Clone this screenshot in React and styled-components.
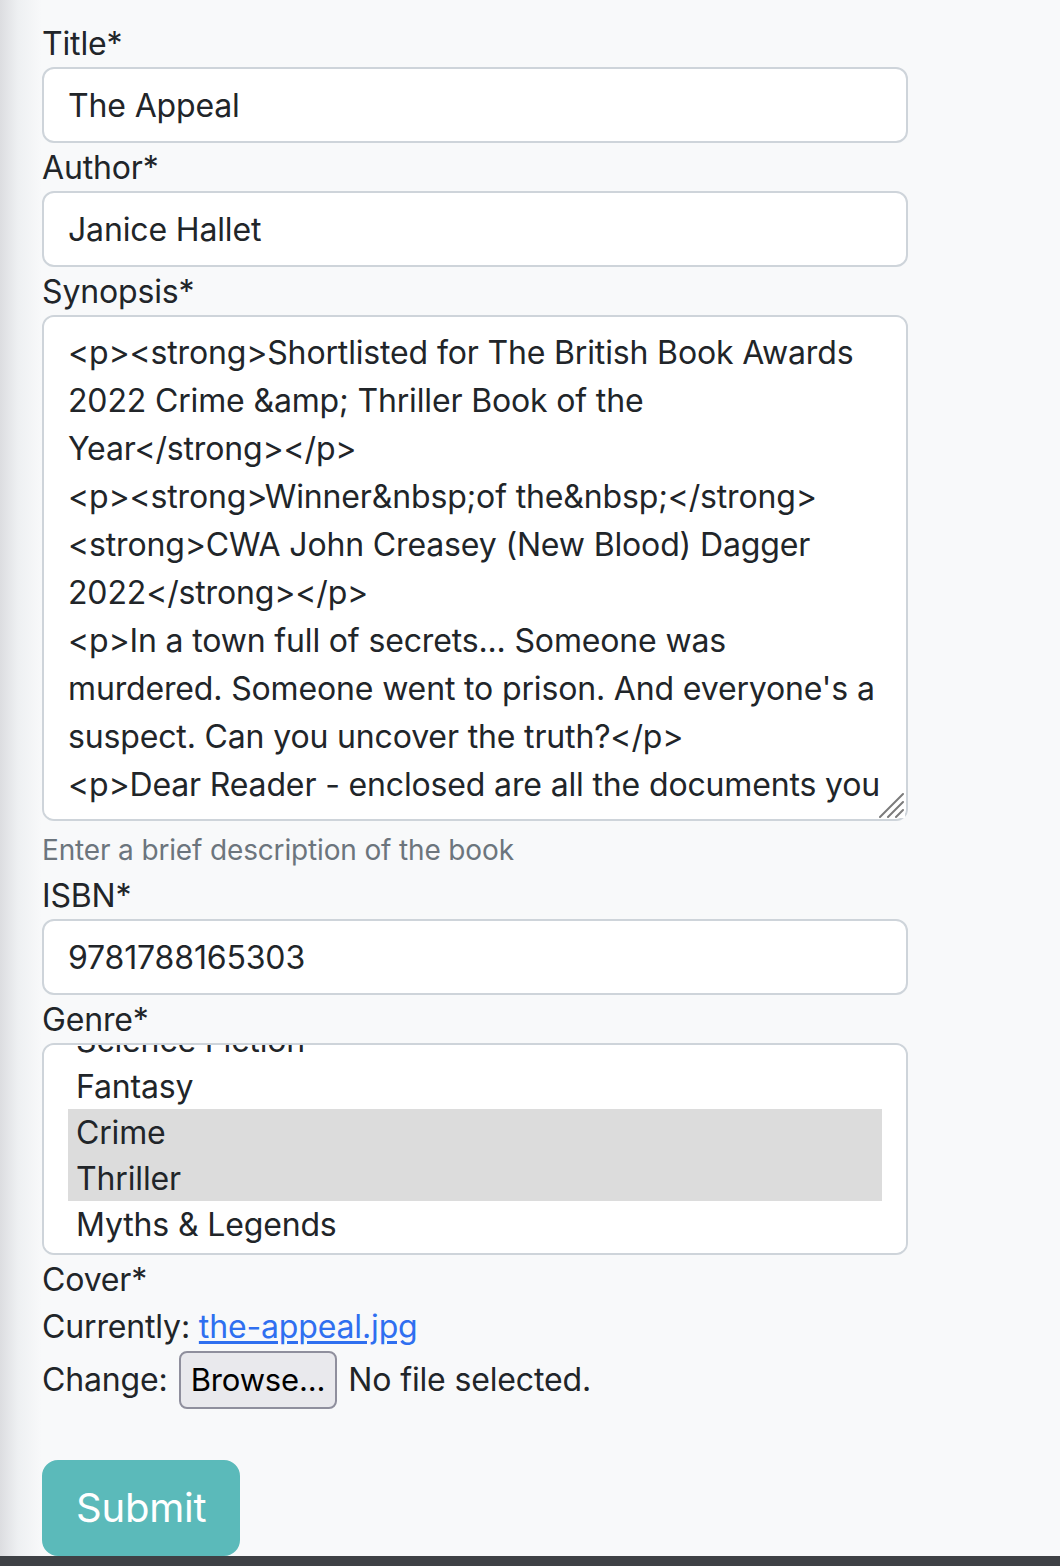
import { useEffect, useRef } from "react";
import styled, { createGlobalStyle } from "styled-components";

const GlobalStyle = createGlobalStyle`
  html, body {
    margin: 0;
    padding: 0;
  }
  body {
    background: linear-gradient(to right, #dcdde0 0, #eef0f2 18px, #f8f9fa 42px) #f8f9fa;
    font-family: Inter, "Noto Sans", "Liberation Sans", sans-serif;
    letter-spacing: -0.15px;
    color: #212529;
  }
`;

const genres = [
  "Fiction",
  "Non-Fiction",
  "Romance",
  "Horror",
  "Science Fiction",
  "Fantasy",
  "Crime",
  "Thriller",
  "Myths & Legends",
];

// \u2060 keeps "Year</strong></p>" together the way the original browser did
const synopsis = `<p><strong>Shortlisted for The British Book Awards 2022 Crime &amp; Thriller Book of the Year</strong>\u2060</p>
<p><strong>Winner&nbsp;of the&nbsp;</strong><strong>CWA John Creasey (New Blood) Dagger 2022</strong></p>
<p>In a town full of secrets... Someone was murdered. Someone went to prison. And everyone's a suspect. Can you uncover the truth?</p>
<p>Dear Reader - enclosed are all the documents you need to solve a murder case. Emails, messages and letters between the members of a local theatre group.</p>`;

const App = () => {
  const selectRef = useRef(null);

  useEffect(() => {
    // scroll the genre list so the selected ones are in view
    if (selectRef.current) selectRef.current.scrollTop = 224;
  }, []);

  return (
    <>
      <GlobalStyle />
      <Page>
        <Form onSubmit={(e) => e.preventDefault()}>
          <Label htmlFor="title">Title*</Label>
          <Input id="title" type="text" defaultValue="The Appeal" />

          <Label htmlFor="author">Author*</Label>
          <Input id="author" type="text" defaultValue="Janice Hallet" />

          <Label htmlFor="synopsis">Synopsis*</Label>
          <TextAreaWrap>
            <TextArea id="synopsis" rows={10} defaultValue={synopsis} />
            <Grip width="26" height="26" viewBox="0 0 26 26">
              <path
                d="M1 25 L24 2 M9 25 L24 10 M17 25 L24 18"
                stroke="#7b7b7b"
                strokeWidth="2"
                strokeLinecap="round"
              />
            </Grip>
          </TextAreaWrap>
          <Help>Enter a brief description of the book</Help>

          <Label htmlFor="isbn">ISBN*</Label>
          <Input id="isbn" type="text" defaultValue="9781788165303" />

          <Label htmlFor="genre">Genre*</Label>
          <GenreSelect
            id="genre"
            multiple
            ref={selectRef}
            defaultValue={["Crime", "Thriller"]}
          >
            {genres.map((g) => (
              <option key={g} value={g}>
                {g}
              </option>
            ))}
          </GenreSelect>

          <Label as="div">Cover*</Label>
          <Line>
            Currently: <CoverLink href="#cover">the-appeal.jpg</CoverLink>
          </Line>
          <Line $gap={11}>
            Change:
            <BrowseButton>
              Browse...
              <HiddenFile type="file" />
            </BrowseButton>
            <span>No file selected.</span>
          </Line>

          <SubmitButton type="submit">Submit</SubmitButton>
        </Form>
      </Page>
      <Footer />
    </>
  );
};

export default App;

const Page = styled.div`
  padding: 19px 0 0 42px;
`;

const Form = styled.form`
  width: 866px;
  display: flex;
  flex-direction: column;
`;

const Label = styled.label`
  display: block;
  font-size: 32px;
  line-height: 46px;
  padding-top: 2px;
`;

const fieldBase = `
  box-sizing: border-box;
  width: 100%;
  font-family: Inter, "Noto Sans", "Liberation Sans", sans-serif;
  font-size: 32px;
  line-height: 48px;
  letter-spacing: -0.15px;
  color: #212529;
  background: #fff;
  border: 2px solid #ced4da;
  border-radius: 12px;
  padding: 12px 24px;
  margin: 0;
  outline: none;
`;

const Input = styled.input`
  ${fieldBase}
  height: 76px;
`;

const TextAreaWrap = styled.div`
  position: relative;
`;

const TextArea = styled.textarea`
  ${fieldBase}
  display: block;
  height: 506px;
  resize: vertical;
  scrollbar-width: none;
`;

const Grip = styled.svg`
  position: absolute;
  right: 3px;
  bottom: 3px;
  pointer-events: none;
  background: #fff;
`;

const Help = styled.div`
  margin-top: 8px;
  font-size: 28px;
  line-height: 42px;
  color: #6c757d;
`;

const GenreSelect = styled.select`
  ${fieldBase}
  height: 212px;
  scrollbar-width: none;
  overflow-y: auto;

  option {
    padding: 4px 8px 0;
    line-height: 42px;
    min-height: 42px;
    color: #212529;
  }
  option:checked {
    background: linear-gradient(#dcdcdc, #dcdcdc);
    color: #212529;
  }
`;

const Line = styled.div`
  display: flex;
  align-items: center;
  gap: ${(p) => p.$gap || 0}px;
  font-size: 32px;
  line-height: 48px;
  min-height: 48px;
  white-space: pre;
`;

const CoverLink = styled.a`
  color: #2f6ff0;
  text-decoration: underline;
  text-underline-offset: 3px;
`;

const BrowseButton = styled.label`
  box-sizing: border-box;
  height: 58px;
  display: inline-flex;
  align-items: center;
  padding: 0 10px;
  background: #e9e9ed;
  border: 2px solid #8f8f9d;
  border-radius: 8px;
  color: #000;
  font-size: 31px;
  cursor: pointer;
`;

const HiddenFile = styled.input`
  display: none;
`;

const SubmitButton = styled.button`
  align-self: flex-start;
  margin-top: 51px;
  box-sizing: border-box;
  height: 96px;
  padding: 16px 32px;
  font-family: Inter, "Noto Sans", "Liberation Sans", sans-serif;
  font-size: 40px;
  line-height: 60px;
  letter-spacing: -0.2px;
  color: #fff;
  background: #5bbaba;
  border: 2px solid #5bbaba;
  border-radius: 16px;
  cursor: pointer;
`;

const Footer = styled.footer`
  height: 120px;
  background: #3e4145;
`;
